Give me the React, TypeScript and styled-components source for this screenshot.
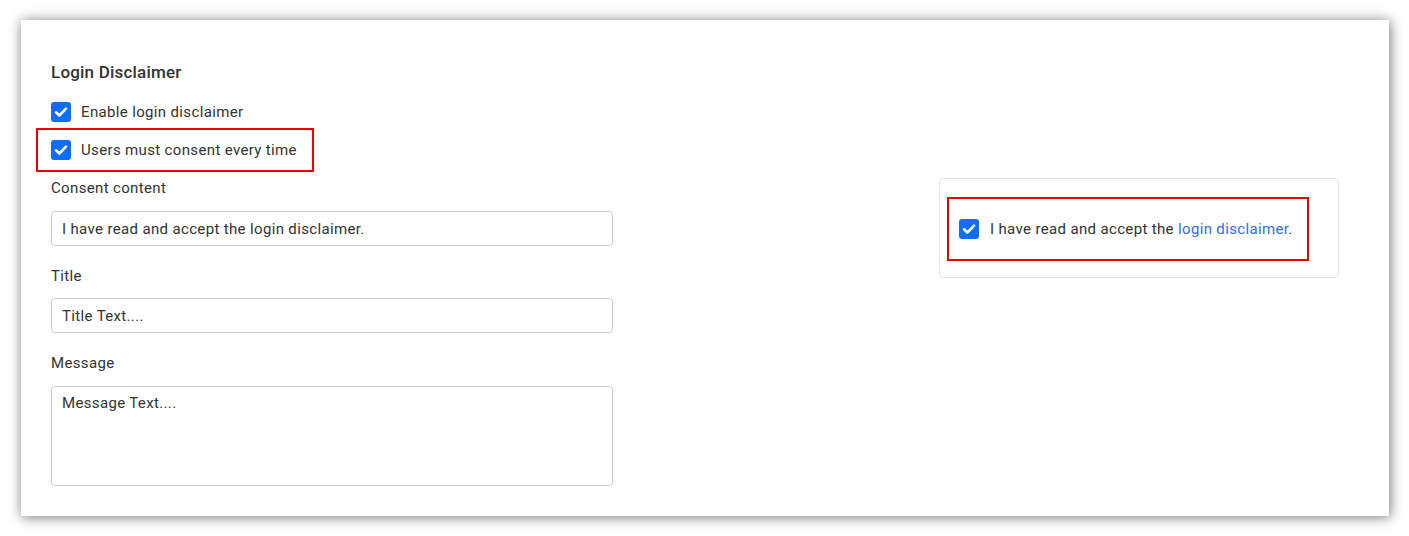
import React from "react";
import styled, { createGlobalStyle } from "styled-components";

const Global = createGlobalStyle`
  html, body { margin: 0; padding: 0; background: #ffffff; }
  body { font-family: Roboto, "Liberation Sans", Arial, sans-serif; color: #333333; }
  * { box-sizing: border-box; }
`;

const Page = styled.div`
  padding: 20px 20px 20px 21px;
`;

const Panel = styled.section`
  width: 1368px;
  height: 496px;
  background: #ffffff;
  box-shadow: 1px 1px 12px rgba(0, 0, 0, 0.55);
  padding: 40px 30px 30px 30px;
  display: flex;
  align-items: flex-start;
  gap: 326px;
`;

const Column = styled.div`
  width: 562px;
  display: flex;
  flex-direction: column;
`;

const Heading = styled.h2`
  margin: 0 0 18px 0;
  font-size: 17px;
  font-weight: 500;
  letter-spacing: 0.2px;
  line-height: 24px;
  color: #333333;
`;

const CheckRow = styled.label<{ $mt?: number }>`
  display: flex;
  align-items: center;
  gap: 10px;
  height: 20px;
  margin-top: ${(p) => p.$mt ?? 0}px;
  font-size: 15px;
  letter-spacing: 0.35px;
  line-height: 20px;
  color: #333333;
  white-space: nowrap;
`;

const Highlight = styled.div<{ $mt?: number }>`
  border: 2px solid #ee0000;
  margin-top: ${(p) => p.$mt ?? 0}px;
  display: flex;
  align-items: center;
`;

const LeftHighlight = styled(Highlight)`
  width: 278px;
  height: 44px;
  margin-left: -15px;
  padding-left: 13px;
`;

const Box = styled.span`
  width: 20px;
  height: 20px;
  flex: 0 0 20px;
  border-radius: 3px;
  background: #0d6efd;
  display: inline-flex;
  align-items: center;
  justify-content: center;
`;

const FieldLabel = styled.div<{ $mt: number }>`
  margin-top: ${(p) => p.$mt}px;
  font-size: 15px;
  letter-spacing: 0.35px;
  line-height: 20px;
  color: #333333;
`;

const Input = styled.div<{ $mt: number }>`
  margin-top: ${(p) => p.$mt}px;
  height: 35px;
  border: 1px solid #cccccc;
  border-radius: 4px;
  padding: 0 10px;
  display: flex;
  align-items: center;
  font-size: 15px;
  letter-spacing: 0.35px;
  color: #333333;
`;

const TextArea = styled.div<{ $mt: number }>`
  margin-top: ${(p) => p.$mt}px;
  height: 100px;
  border: 1px solid #cccccc;
  border-radius: 4px;
  padding: 6px 10px;
  font-size: 15px;
  letter-spacing: 0.35px;
  line-height: 20px;
  color: #333333;
`;

const Card = styled.div`
  margin-top: 118px;
  width: 400px;
  height: 100px;
  border: 1px solid #e6e6e6;
  border-radius: 4px;
  padding: 18px 0 0 7px;
`;

const CardHighlight = styled(Highlight)`
  width: 362px;
  height: 64px;
  padding-left: 10px;
`;

const Link = styled.span`
  color: #2f6cf2;
`;

const CardRow = styled(CheckRow)`
  gap: 11px;
`;

const Check = () => (
  <Box>
    <svg width="16" height="16" viewBox="0 0 16 16" fill="none">
      <path d="M3 8.3 L6.4 11.5 L13 4.6" stroke="#ffffff" strokeWidth="2.6" strokeLinecap="round" strokeLinejoin="round" />
    </svg>
  </Box>
);

export default function App() {
  return (
    <>
      <Global />
      <Page>
        <Panel>
          <Column>
            <Heading>Login Disclaimer</Heading>
            <CheckRow>
              <Check />
              Enable login disclaimer
            </CheckRow>
            <LeftHighlight $mt={6}>
              <CheckRow>
                <Check />
                Users must consent every time
              </CheckRow>
            </LeftHighlight>
            <FieldLabel $mt={6}>Consent content</FieldLabel>
            <Input $mt={13}>I have read and accept the login disclaimer.</Input>
            <FieldLabel $mt={20}>Title</FieldLabel>
            <Input $mt={12}>Title Text....</Input>
            <FieldLabel $mt={20}>Message</FieldLabel>
            <TextArea $mt={13}>Message Text....</TextArea>
          </Column>
          <Card>
            <CardHighlight>
              <CardRow>
                <Check />
                <span>
                  I have read and accept the <Link>login disclaimer</Link>.
                </span>
              </CardRow>
            </CardHighlight>
          </Card>
        </Panel>
      </Page>
    </>
  );
}
